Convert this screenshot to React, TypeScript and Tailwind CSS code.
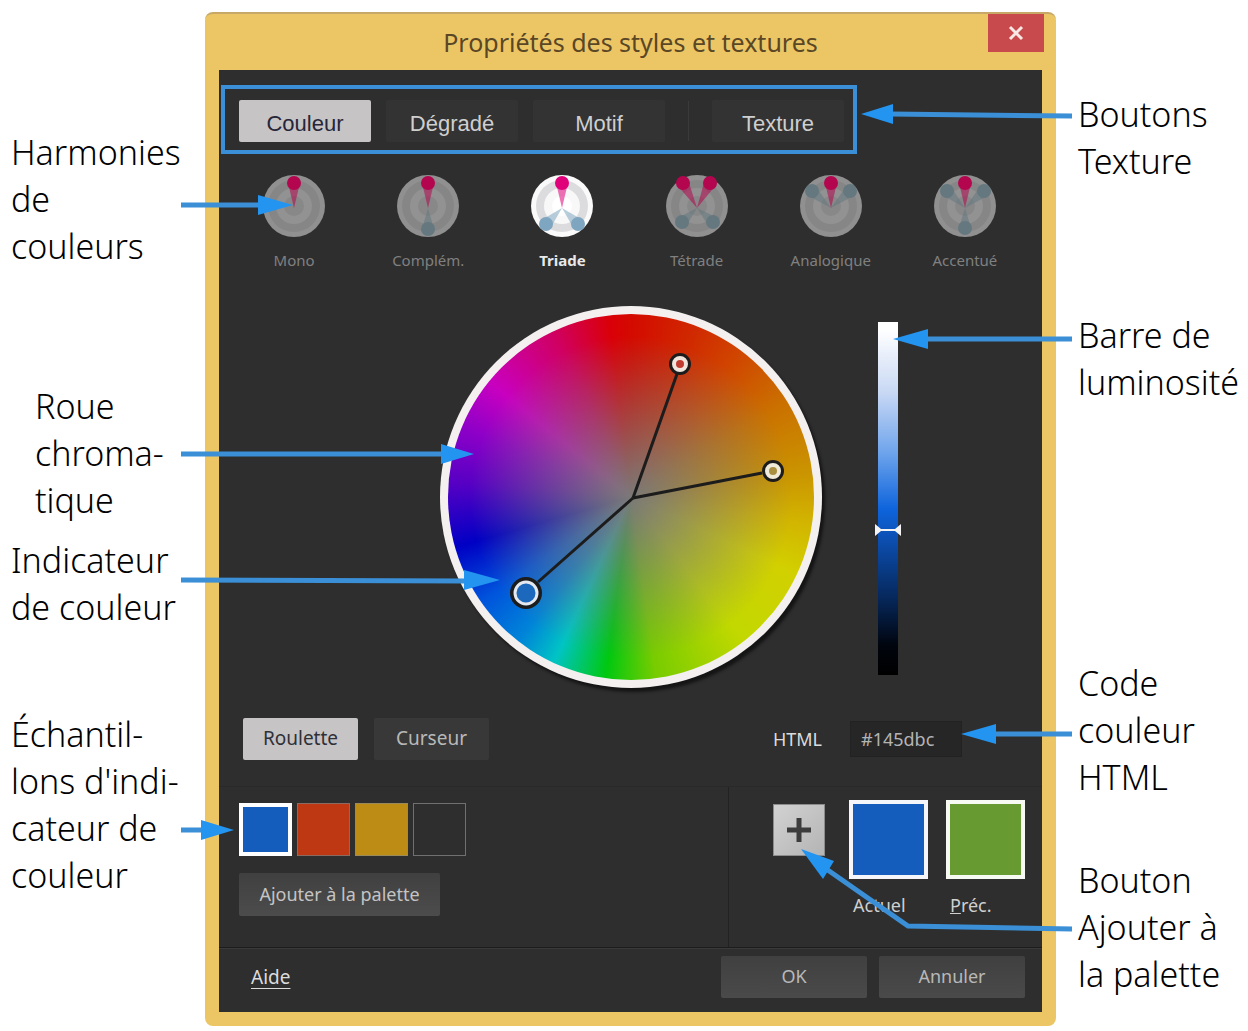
import { useState } from "react";
import clsx from "clsx";

type Dot = { x: number; y: number; main?: boolean };

interface Harmony {
  id: string;
  label: string;
  dots: Dot[];
}

const HARMONIES: Harmony[] = [
  { id: "mono", label: "Mono", dots: [{ x: 32, y: 9, main: true }] },
  {
    id: "complement",
    label: "Complém.",
    dots: [{ x: 32, y: 55 }, { x: 32, y: 9, main: true }],
  },
  {
    id: "triade",
    label: "Triade",
    dots: [{ x: 16, y: 50 }, { x: 48, y: 50 }, { x: 32, y: 9, main: true }],
  },
  {
    id: "tetrade",
    label: "Tétrade",
    dots: [
      { x: 17, y: 48 },
      { x: 48, y: 48 },
      { x: 18, y: 9, main: true },
      { x: 45, y: 9, main: true },
    ],
  },
  {
    id: "analogique",
    label: "Analogique",
    dots: [{ x: 13, y: 17 }, { x: 51, y: 17 }, { x: 32, y: 9, main: true }],
  },
  {
    id: "accentue",
    label: "Accentué",
    dots: [
      { x: 14, y: 17 },
      { x: 51, y: 17 },
      { x: 32, y: 54 },
      { x: 32, y: 9, main: true },
    ],
  },
];

const SAMPLES = [
  { name: "Bleu", className: "border-4 border-white bg-[#145dbc]" },
  { name: "Rouge", className: "border border-[#8b6a60] bg-[#be3814]" },
  { name: "Ocre", className: "border border-[#9a8a5c] bg-[#bc8c14]" },
  { name: "Vide", className: "border border-[#707070] bg-[#2e2e2e]" },
];

function HarmonyIcon({ dots, active }: { dots: Dot[]; active: boolean }) {
  const pink = active ? "#e0007a" : "#b3064f";
  const blue = active ? "#7ea6c0" : "#65787f";

  return (
    <svg viewBox="0 0 64 64" className="size-16" aria-hidden="true">
      <circle cx="32" cy="32" r="31" fill={active ? "#fafafa" : "#909090"} />
      <circle cx="32" cy="32" r="26" fill={active ? "#dcdcde" : "#868686"} />
      <circle cx="32" cy="32" r="18" fill={active ? "#f8f8f8" : "#929292"} />
      <circle cx="32" cy="32" r="10" fill={active ? "#ffffff" : "#888888"} />
      {dots.map((d) => {
        const len = Math.hypot(d.x - 32, d.y - 32);
        const nx = (-(d.y - 32) / len) * 6;
        const ny = ((d.x - 32) / len) * 6;
        const color = d.main ? pink : blue;
        return (
          <g key={`${d.x}-${d.y}`} fill={color}>
            <polygon
              points={`${d.x + nx},${d.y + ny} ${d.x - nx},${d.y - ny} 32,34`}
              opacity="0.55"
            />
            <circle cx={d.x} cy={d.y} r="7" />
          </g>
        );
      })}
    </svg>
  );
}

function ColorWheel() {
  return (
    <div className="relative size-[382px] rounded-full bg-[#f4f0f0] p-2 shadow-[3px_4px_3px_#151515]">
      <div className="size-full rounded-full bg-[radial-gradient(closest-side,#7b7977_0%,#7b7977e0_12%,#7b797700_88%),conic-gradient(#d40a00_0deg,#d02800_20deg,#d04400_36deg,#ca7000_58deg,#ca9400_82deg,#d2b400_98deg,#d2d000_115deg,#c2d800_142deg,#78cc00_172deg,#00c810_188deg,#00c4c4_205deg,#0084d8_218deg,#0054dc_235deg,#0000c4_254deg,#5800c4_275deg,#8c00c8_292deg,#c800c0_309deg,#d00060_335deg,#da0008_353deg,#d40a00_360deg)]" />
      <svg
        viewBox="0 0 382 382"
        className="absolute inset-0 size-full"
        aria-hidden="true"
      >
        <g stroke="#1c1c1c" strokeWidth="3">
          <line x1="193" y1="192" x2="237" y2="68" />
          <line x1="193" y1="192" x2="322" y2="167" />
          <line x1="193" y1="192" x2="98" y2="276" />
        </g>
        <circle cx="240" cy="58" r="8" fill="#c03c30" stroke="#1c1c1c" strokeWidth="6" />
        <circle cx="240" cy="58" r="6" fill="none" stroke="#f0e4dc" strokeWidth="4" />
        <circle cx="333" cy="165" r="8" fill="#a89040" stroke="#1c1c1c" strokeWidth="6" />
        <circle cx="333" cy="165" r="6" fill="none" stroke="#f0ead8" strokeWidth="4" />
        <circle cx="86" cy="287" r="13" fill="#1c68bc" stroke="#1c1c1c" strokeWidth="6" />
        <circle cx="86" cy="287" r="11" fill="none" stroke="#e4e8f0" strokeWidth="3" />
      </svg>
    </div>
  );
}

function BrightnessBar() {
  const [value, setValue] = useState(41);

  return (
    <div className="relative h-[353px] w-5 bg-[linear-gradient(#ffffff_2%,#c8d8f4_20%,#6ea4ec_37%,#0e64dc_53%,#0c50b4_61%,#06285c_78%,#00040c_92%,#000000_100%)]">
      <svg
        viewBox="0 0 26 12"
        className="absolute -left-[3px] h-3 w-[26px] -translate-y-1/2"
        style={{ top: `${100 - value}%` }}
        aria-hidden="true"
      >
        <path d="M0 0 L6 5 H20 L26 0 V12 L20 7 H6 L0 12 Z" fill="#f4f4f4" />
      </svg>
      <input
        type="range"
        aria-label="Luminosité"
        value={value}
        onChange={(e) => setValue(Number(e.target.value))}
        className="absolute inset-0 size-full opacity-0 [direction:rtl] [writing-mode:vertical-lr]"
      />
    </div>
  );
}

function TabButton({
  label,
  active,
  onClick,
}: {
  label: string;
  active: boolean;
  onClick: () => void;
}) {
  return (
    <button
      type="button"
      aria-pressed={active}
      onClick={onClick}
      className={clsx(
        "h-[42px] w-[132px] rounded-xs text-[22px]",
        active ? "bg-[#c6c4c5] text-[#26263a]" : "bg-[#333333] text-[#cfcfcf]",
      )}
    >
      {label}
    </button>
  );
}

function StyleDialog() {
  const [tab, setTab] = useState("Couleur");
  const [harmony, setHarmony] = useState("triade");
  const [mode, setMode] = useState("Roulette");
  const [html, setHtml] = useState("#145dbc");

  return (
    <section
      aria-label="Propriétés des styles et textures"
      className="mt-3 flex min-w-0 flex-1 flex-col rounded-lg border-t-2 border-[#c8a866] bg-[#ecc665] px-[14px] pb-[14px] font-normal"
    >
      <header className="relative flex h-14 items-center justify-center">
        <h1 className="font-['Noto_Sans'] text-[25px] text-[#5a4726]">
          Propriétés des styles et textures
        </h1>
        <button
          type="button"
          aria-label="Fermer"
          className="absolute -right-0.5 top-0 flex h-[38px] w-14 items-center justify-center bg-[#c84a4c] text-white"
        >
          <svg viewBox="0 0 16 16" className="size-4" aria-hidden="true">
            <path d="M2 2 L14 14 M14 2 L2 14" stroke="#f8e8e4" strokeWidth="3" />
          </svg>
        </button>
      </header>

      <div className="flex flex-col bg-[#2e2e2e] font-['Liberation_Sans'] text-[#d0d0d0]">
        <div className="ml-0.5 mt-[15px] flex h-[69px] w-[636px] items-center gap-[15px] border-4 border-[#3a8fd6] pl-[14px] pt-0.5">
          {["Couleur", "Dégradé", "Motif"].map((name) => (
            <TabButton
              key={name}
              label={name}
              active={tab === name}
              onClick={() => setTab(name)}
            />
          ))}
          <div className="mx-2 h-10 w-px bg-[#3a3a3a]" />
          <TabButton
            label="Texture"
            active={tab === "Texture"}
            onClick={() => setTab("Texture")}
          />
        </div>

        <div className="mt-5 grid grid-cols-6 pl-2 pr-2.5">
          {HARMONIES.map((h) => {
            const active = h.id === harmony;
            return (
              <button
                key={h.id}
                type="button"
                aria-pressed={active}
                onClick={() => setHarmony(h.id)}
                className={clsx(
                  "flex flex-col items-center gap-3 font-['Noto_Sans'] text-[15px] leading-5",
                  active ? "font-bold text-[#e8e8e8]" : "text-[#808080]",
                )}
              >
                <HarmonyIcon dots={h.dots} active={active} />
                {h.label}
              </button>
            );
          })}
        </div>

        <div className="mt-9 flex items-start justify-end gap-14 pr-36">
          <ColorWheel />
          <div className="pt-4">
            <BrightnessBar />
          </div>
        </div>

        <div className="mt-[30px] flex items-center pl-6 pr-20 font-['Noto_Sans']">
          {["Roulette", "Curseur"].map((name) => (
            <button
              key={name}
              type="button"
              aria-pressed={mode === name}
              onClick={() => setMode(name)}
              className={clsx(
                "mr-4 h-[42px] w-[115px] rounded-xs pb-0.5 text-[19px] leading-6",
                mode === name
                  ? "bg-[#c6c4c5] text-[#303038]"
                  : "bg-[#383838] text-[#b8b8b8]",
              )}
            >
              {name}
            </button>
          ))}
          <label htmlFor="html-code" className="ml-auto text-[18px] leading-6 text-[#dcdcdc]">
            HTML
          </label>
          <input
            id="html-code"
            value={html}
            onChange={(e) => setHtml(e.target.value)}
            className="ml-7 h-9 w-28 border border-[#222222] bg-[#262626] pl-2.5 text-[18px] leading-6 text-[#b4b4b4]"
          />
        </div>

        <div className="mt-[26px] flex h-[162px] border-y border-t-[#292929] border-b-[#1d1d1d] font-['Noto_Sans']">
          <div className="flex flex-1 flex-col items-start gap-[17px] pl-5 pt-4">
            <div className="flex gap-[5px]">
              {SAMPLES.map((s) => (
                <button
                  key={s.name}
                  type="button"
                  aria-label={s.name}
                  className={clsx("size-[53px]", s.className)}
                />
              ))}
            </div>
            <button
              type="button"
              className="h-[43px] w-[201px] rounded-xs bg-linear-to-b from-[#404040] to-[#4c4c4c] pb-0.5 text-[18px] leading-6 text-[#c4c4c4]"
            >
              Ajouter à la palette
            </button>
          </div>
          <div className="flex w-[314px] items-start border-l border-[#222222] pl-[44px] pt-[13px]">
            <button
              type="button"
              aria-label="Ajouter à la palette"
              className="mt-1 flex size-[52px] items-center justify-center border border-[#8c8c8c] bg-linear-to-br from-[#d2d2d2] to-[#b4b4b4]"
            >
              <svg viewBox="0 0 26 26" className="size-[26px]" aria-hidden="true">
                <path d="M13 1 V25 M1 13 H25" stroke="#3c3c3c" strokeWidth="5" />
              </svg>
            </button>
            <div className="ml-6 w-[79px]">
              <div className="size-[79px] border-4 border-[#f4f6fa] bg-[#145dbc]" />
              <div className="mt-3.5 pl-1 text-[18px] leading-6">Actuel</div>
            </div>
            <div className="ml-[18px] w-[79px]">
              <div className="size-[79px] border-4 border-[#f6faf2] bg-[#679a30]" />
              <div className="mt-3.5 pl-1 text-[18px] leading-6">
                <span className="underline">P</span>réc.
              </div>
            </div>
          </div>
        </div>

        <footer className="flex h-[64px] items-center gap-3 border-t border-[#3a3a3a] pb-2 pl-8 pr-[17px] font-['Noto_Sans'] leading-6">
          <a href="#aide" className="mr-auto text-[19px] text-[#dcdcdc] underline underline-offset-4">
            Aide
          </a>
          <button
            type="button"
            className="h-[42px] w-[146px] rounded-xs bg-linear-to-b from-[#404040] to-[#4a4a4a] pb-0.5 text-[18px] text-[#b8b8b8]"
          >
            OK
          </button>
          <button
            type="button"
            className="h-[42px] w-[146px] rounded-xs bg-linear-to-b from-[#404040] to-[#4a4a4a] pb-0.5 text-[18px] text-[#b8b8b8]"
          >
            Annuler
          </button>
        </footer>
      </div>
    </section>
  );
}

function Note({ lines, className }: { lines: string[]; className?: string }) {
  return (
    <p className={className}>
      {lines.map((line) => (
        <span key={line} className="block whitespace-nowrap">
          {line}
        </span>
      ))}
    </p>
  );
}

export default function App() {
  return (
    <main className="relative flex min-h-screen items-start bg-white font-['Noto_Sans'] text-[34px] font-light leading-[47px] text-black">
      <aside className="w-[205px] shrink-0 pl-[11px] pt-[129px]">
        <Note lines={["Harmonies", "de", "couleurs"]} />
        <Note className="ml-6 mt-[113px]" lines={["Roue", "chroma-", "tique"]} />
        <Note className="mt-[13px]" lines={["Indicateur", "de couleur"]} />
        <Note
          className="mt-20"
          lines={["Échantil-", "lons d'indi-", "cateur de", "couleur"]}
        />
      </aside>

      <StyleDialog />

      <aside className="w-48 shrink-0 pl-[22px] pt-[91px]">
        <Note lines={["Boutons", "Texture"]} />
        <Note className="mt-[127px]" lines={["Barre de", "luminosité"]} />
        <Note className="mt-[254px]" lines={["Code", "couleur", "HTML"]} />
        <Note className="mt-14" lines={["Bouton", "Ajouter à", "la palette"]} />
      </aside>

      {/* callout arrows, one drawing per side so each stays with its labels */}
      <svg
        viewBox="0 0 520 1031"
        className="pointer-events-none absolute left-0 top-0 h-[1031px] w-[520px]"
        aria-hidden="true"
      >
        <g stroke="#3a8fd6" strokeWidth="5">
          <path d="M181 205 H262 M181 454 H444 M181 580 L466 581 M181 830 H204" />
        </g>
        <g fill="#2394f0">
          <path d="M293 205 L258 195 V215 Z" />
          <path d="M474 454 L441 444 V464 Z" />
          <path d="M500 580 L464 570 V590 Z" />
          <path d="M234 830 L201 820 V840 Z" />
        </g>
      </svg>
      <svg
        viewBox="768 0 480 1031"
        className="pointer-events-none absolute right-0 top-0 h-[1031px] w-[480px]"
        aria-hidden="true"
      >
        <g stroke="#3a8fd6" strokeWidth="5" fill="none">
          <path d="M1072 116 L890 114 M1072 339 H924 M1072 734 H992 M1072 929 L908 926 L822 866" />
        </g>
        <g fill="#2394f0">
          <path d="M861 114 L893 104 V124 Z" />
          <path d="M893 339 L928 329 V349 Z" />
          <path d="M961 734 L996 724 V744 Z" />
          <path d="M801 849 L834 861 L823 879 Z" />
        </g>
      </svg>
    </main>
  );
}
